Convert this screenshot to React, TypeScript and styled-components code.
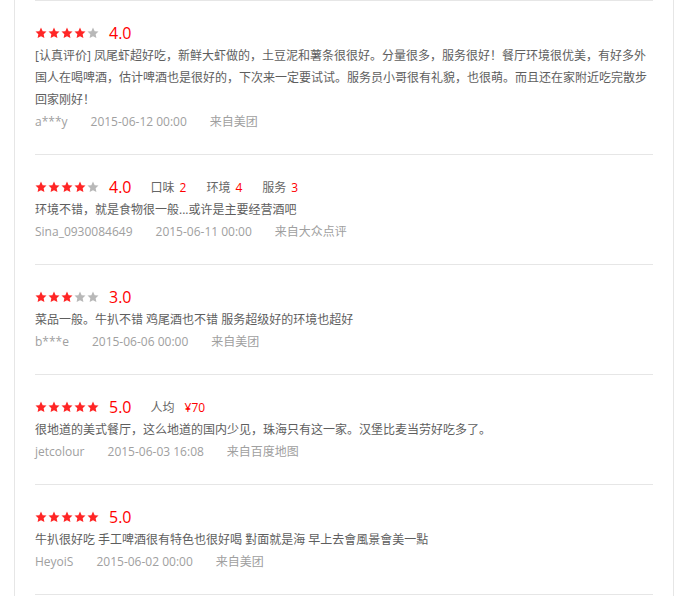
import React from 'react';
import styled, { createGlobalStyle } from 'styled-components';

const GlobalStyle = createGlobalStyle`
  html, body {
    margin: 0;
    padding: 0;
    background: #fff;
  }
  body {
    font-family: "Open Sans", "Noto Sans CJK SC", sans-serif;
  }
`;

const Panel = styled.div`
  box-sizing: border-box;
  width: 660px;
  min-height: 100vh;
  margin-left: 14px;
  padding: 0 20px;
  border-left: 1px solid #e6e6e6;
  border-right: 1px solid #e6e6e6;
`;

const ReviewList = styled.ul`
  list-style: none;
  margin: 0;
  padding: 0;
`;

const ReviewItem = styled.li`
  padding: 20px 0 21px;
  border-top: 1px solid #e6e6e6;

  &:last-child {
    border-bottom: 1px solid #e6e6e6;
  }
`;

const RatingRow = styled.div`
  display: flex;
  align-items: center;
  height: 24px;
`;

const Stars = styled.div`
  display: flex;
  gap: 1px;
`;

const StarIcon = styled.svg<{ $on: boolean }>`
  display: block;
  width: 12px;
  height: 12px;
  fill: ${(p) => (p.$on ? '#ff2626' : '#b8b8b8')};
`;

const Score = styled.span`
  margin-left: 10px;
  font-size: 16px;
  color: #f00;
  line-height: 24px;
`;

const Tag = styled.span<{ $gap: number }>`
  margin-left: ${(p) => p.$gap}px;
  font-size: 12px;
  color: #666;
`;

const TagValue = styled.span<{ $space: number }>`
  margin-left: ${(p) => p.$space}px;
  color: #f00;
`;

const Content = styled.p`
  margin: 0;
  font-size: 12px;
  line-height: 22px;
  color: #5e5e5e;
`;

const Meta = styled.div`
  display: flex;
  font-size: 12px;
  line-height: 22px;
  color: #a0a0a0;
`;

const MetaItem = styled.span`
  margin-right: 23px;
`;

type Review = {
  score: number;
  tags?: { label: string; value: string; space?: number }[];
  text: string;
  user: string;
  time: string;
  source: string;
};

const reviews: Review[] = [
  {
    score: 4,
    text:
      '[认真评价] 凤尾虾超好吃，新鲜大虾做的，土豆泥和薯条很很好。分量很多，服务很好！餐厅环境很优美，有好多外国人在喝啤酒，估计啤酒也是很好的，下次来一定要试试。服务员小哥很有礼貌，也很萌。而且还在家附近吃完散步回家刚好！',
    user: 'a***y',
    time: '2015-06-12 00:00',
    source: '来自美团',
  },
  {
    score: 4,
    tags: [
      { label: '口味', value: '2' },
      { label: '环境', value: '4' },
      { label: '服务', value: '3' },
    ],
    text: '环境不错，就是食物很一般...或许是主要经营酒吧',
    user: 'Sina_0930084649',
    time: '2015-06-11 00:00',
    source: '来自大众点评',
  },
  {
    score: 3,
    text: '菜品一般。牛扒不错 鸡尾酒也不错 服务超级好的环境也超好',
    user: 'b***e',
    time: '2015-06-06 00:00',
    source: '来自美团',
  },
  {
    score: 5,
    tags: [{ label: '人均', value: '¥70', space: 10 }],
    text: '很地道的美式餐厅，这么地道的国内少见，珠海只有这一家。汉堡比麦当劳好吃多了。',
    user: 'jetcolour',
    time: '2015-06-03 16:08',
    source: '来自百度地图',
  },
  {
    score: 5,
    text: '牛扒很好吃 手工啤酒很有特色也很好喝 對面就是海 早上去會風景會美一點',
    user: 'HeyoiS',
    time: '2015-06-02 00:00',
    source: '来自美团',
  },
];

function Star({ on }: { on: boolean }) {
  return (
    <StarIcon $on={on} viewBox="0 0 24 24">
      <path d="M12 1.2l3.3 7.1 7.7.9-5.7 5.3 1.5 7.7L12 18.3l-6.8 3.9 1.5-7.7L1 9.2l7.7-.9z" />
    </StarIcon>
  );
}

export default function App() {
  return (
    <>
      <GlobalStyle />
      <Panel>
        <ReviewList>
          {reviews.map((r, i) => (
            <ReviewItem key={i}>
              <RatingRow>
                <Stars>
                  {[1, 2, 3, 4, 5].map((n) => (
                    <Star key={n} on={n <= r.score} />
                  ))}
                </Stars>
                <Score>{r.score.toFixed(1)}</Score>
                {r.tags?.map((t, j) => (
                  <Tag key={t.label} $gap={j === 0 ? 19 : 20}>
                    {t.label}
                    <TagValue $space={t.space ?? 5}>{t.value}</TagValue>
                  </Tag>
                ))}
              </RatingRow>
              <Content>{r.text}</Content>
              <Meta>
                <MetaItem>{r.user}</MetaItem>
                <MetaItem>{r.time}</MetaItem>
                <MetaItem>{r.source}</MetaItem>
              </Meta>
            </ReviewItem>
          ))}
        </ReviewList>
      </Panel>
    </>
  );
}
